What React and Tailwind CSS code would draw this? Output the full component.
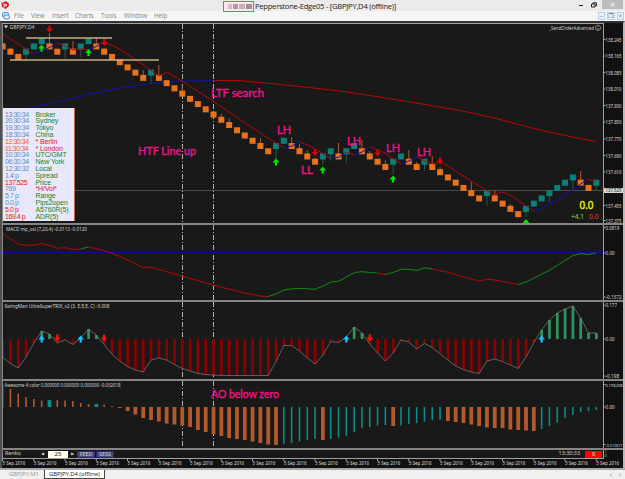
import React from "react";
import { ChevronLeft, ChevronRight } from "lucide-react";

const STEP = 7.812;
const barX = (i) => 2.6 + STEP * i;

// Renko brick rows, one per column (0 = highest price)
const LEVELS = [
  1, 2, 3, 2, 1, 0, 1, 2, 1, 2, 1, 0, 1, 2, 3, 4, 5, 6, 7, 6, 7, 8, 9, 10, 11, 12, 13, 14, 15, 16,
  17, 18, 19, 20, 21, 20, 19, 20, 21, 22, 23, 22, 21, 22, 21, 20, 21, 22, 23, 24, 23, 22, 23, 24,
  23, 24, 25, 26, 27, 28, 29, 30, 29, 30, 31, 32, 33, 32, 31, 30, 29, 28, 27, 26, 27, 28, 27,
];
const levelY = (l) => 41.2 + l * 5.24;

// column → wick end
const WICKS = {
  1: 48, 3: 61, 6: 33, 8: 59, 9: 41, 10: 57, 12: 38, 13: 48, 18: 70, 19: 84, 20: 65, 23: 85,
  28: 114, 29: 118, 33: 138, 35: 159, 37: 137, 38: 144, 39: 150, 40: 158, 41: 165, 42: 161,
  43: 143, 44: 163, 46: 140, 47: 151, 49: 160, 50: 174, 52: 150, 53: 162, 54: 171, 55: 156,
  56: 167, 60: 182, 62: 205, 63: 190, 65: 204, 67: 217, 70: 202, 73: 190, 74: 171, 76: 191,
};

const SWING_ZERO = 339;
const SWING = [
  357, 363.5, 368, 357, 343, 331, 334, 343, 340, 344.5, 338, 329, 335, 344.5, 354, 361, 366.5, 370,
  372, 360, 358, 360, 364.5, 368.5, 371, 373.5, 374.5, 375, 375.5, 375.5, 375.5, 375.5, 375.5,
  375.5, 375.5, 361.5, 345.5, 345.5, 351, 358, 364, 355, 341.5, 342.5, 337, 327, 333, 344, 353,
  361, 353, 340, 342, 349, 343.5, 347.5, 354, 360, 366, 369.5, 372, 373.5, 361, 359, 361.5, 365,
  368.5, 357, 342.5, 330, 320, 313, 309, 306, 318, 333, 333,
];

const AO_ZERO = 407;
const AO = [
  384, 389, 393.5, 397, 399, 400.5, 400, 400.1, 400.5, 401, 403, 404.1, 404, 404.5, 406, 408, 411,
  414.5, 418, 420, 421.5, 423.5, 424.5, 425.5, 427, 430, 432, 434, 436, 438, 439, 440, 441.5, 443,
  444.5, 445, 443.7, 443, 441.5, 440, 439, 440, 439, 437.5, 436, 432, 428, 427, 425.5, 425, 426,
  425.5, 424, 423, 421.5, 420, 419.9, 421, 422, 423, 424.5, 426, 427.5, 428, 428.1, 429.5, 430,
  430.5, 431, 429, 426, 422.5, 418, 415, 412, 411, 410,
];

const MACD = [
  ["#b40808", "3,234 10,238.5 18.5,244.2 26,245.3 34,245 41.5,243.7 49.5,245.3 57,248.3 65,247.7 73,249.7 80.5,249"],
  ["#108a10", "80.5,249 88.5,247"],
  ["#b40808", "88.5,247 96,248.5 105,251 120,256.5 143,267.5 151,267.3 182,276 213,285 245,293 260,296 268,296.5"],
  ["#108a10", "268,296.5 276,294 284,290 291,289 299,288.3 315,289.3 323,286 331,282 339,281 354.5,272.5 362,271.7 377,273"],
  ["#b40808", "377,273 385,274.5"],
  ["#108a10", "385,274.5 393,272.5 401,269.3 409,269.3 417,270.3 425,267.8 432,269"],
  ["#b40808", "432,269 449,272.5 464,277 479,281 487,279.3 495,280 518,284.5"],
  ["#108a10", "518,284.5 526,282 549,270.5 573,255.5 581,253.7 588,254.5 596,252.8"],
];

const FAST_MA = [
  ["#b40808", "3,34 33,54"],
  ["#1010c0", "33,54 45,50 57,43"],
  ["#b40808", "57,43 65,46 73,50 81,49 89,50"],
  ["#1010c0", "89,50 97,46 104,42"],
  ["#b40808", "104,42 120,49 136,60 159,76 167,72 182,81 213,101 245,123 268,138 284,148"],
  ["#1010c0", "284,148 292,146 299,142"],
  ["#b40808", "299,142 308,145 322,153 331,159"],
  ["#1010c0", "331,159 339,157 346,152"],
  ["#b40808", "346,152 354,155"],
  ["#1010c0", "354,155 362,152 370,147"],
  ["#b40808", "370,147 385,153 401,164"],
  ["#1010c0", "401,164 409,161 417,157"],
  ["#b40808", "417,157 425,161 433,164 440,162 448,166 471,181 494,195 502,192 510,195 534,211"],
  ["#1010c0", "534,211 542,208 557,200 572,190 588,179"],
  ["#b40808", "588,179 596,182"],
];

const PRICES = [
  ["138.245", 39.5], ["138.165", 56], ["138.085", 72.5], ["138.010", 89], ["137.930", 105.5],
  ["137.850", 122], ["137.770", 139], ["137.690", 155.5], ["137.610", 172], ["137.455", 205.5],
  ["137.375", 220.5],
];

const CLOCKS = [
  ["13:30:34", "Broker"],
  ["20:30:34", "Sydney"],
  ["19:30:34", "Tokyo"],
  ["18:30:34", "China"],
  ["12:30:34", "* Berlin", "text-[#f0592b]", "text-[#e0143c]"],
  ["11:30:34", "* London", "text-[#f0592b]", "text-[#e0143c]"],
  ["10:30:34", "UTC/GMT"],
  ["06:30:34", "New York"],
  ["12:30:32", "Local"],
  ["1.4 p", "Spread"],
  ["137.525", "Price", "text-[#f01020]"],
  ["769", "*H/Vol*", "text-[#5b8fc4]", "text-[#e0143c]"],
  ["5.7 p", "Range"],
  ["0.0 p", "Pips2open"],
  ["5.0 p", "A5760R(5)", "text-[#f01020]"],
  ["169.4 p", "ADR(5)", "text-[#f01020]"],
];

function Lines({ data }) {
  return data.map(([color, points], i) => (
    <polyline key={i} points={points} fill="none" stroke={color} strokeWidth="1" />
  ));
}

function Arrow({ x, y, color, down }) {
  return (
    <path
      d="M0 -3.5 L3.4 0.5 L1.1 0.5 L1.1 3.4 L-1.1 3.4 L-1.1 0.5 L-3.4 0.5 Z"
      fill={color}
      transform={`translate(${x} ${y}) ${down ? "rotate(180)" : ""}`}
    />
  );
}

function Label({ x, y, w, size = 6, color = "#d2d2d2", children, ...rest }) {
  return (
    <text x={x} y={y} fontSize={size} fill={color} textLength={w} lengthAdjust="spacingAndGlyphs" {...rest}>
      {children}
    </text>
  );
}

function Note({ x, y, w, size = 12, children }) {
  return (
    <Label x={x} y={y} w={w} size={size} color="#f0148c" stroke="#f0148c" strokeWidth="0.35" className="font-['Lato',sans-serif]">
      {children}
    </Label>
  );
}

/** Chart pane; the viewBox keeps every pane on the same coordinates */
function Pane({ top, height, axis, children }) {
  return (
    <svg className="block w-[621px] shrink-0 bg-[#191919]" width="621" height={height} viewBox={`2 ${top} 621 ${height}`}>
      <rect x="604" y={top} width="19" height={height} fill="#111" />
      {[182.5, 213.5].map((x) => (
        <line key={x} x1={x} x2={x} y1={top} y2={top + height} stroke="#b4b4a2" strokeDasharray="5 2 1 2" />
      ))}
      {children}
      <line x1="603.5" x2="603.5" y1={top} y2={top + height} stroke="#a0a0a0" />
      {axis.map(([text, y]) => (
        <g key={text}>
          <line x1="603" x2="605.5" y1={y} y2={y} stroke="#a0a0a0" />
          <Label x={605.5} y={y + 2} size={text.length > 7 ? 4.2 : 4.8} w={text.length > 7 ? 17 : text.length * 2.3} color="#dcdcdc">
            {text}
          </Label>
        </g>
      ))}
      <line x1="2.5" x2="2.5" y1={top} y2={top + height} stroke="#888" />
    </svg>
  );
}

const Divider = () => <div className="h-[2px] w-[621px] shrink-0 bg-[#858585]" />;

function PriceChart() {
  return (
    <Pane top={24} height={199} axis={PRICES}>
      <line x1="3" x2="603" y1="190.5" y2="190.5" stroke="#4a4a4a" />
      <polyline points="30,107.5 60,101.5 90,94 120,88 151,83.5 182,81 213,80.5" fill="none" stroke="#1010b4" />
      <polyline
        points="213,80.5 240,80.7 265,83 300,86.5 340,91 370,95.5 410,102 440,107 470,112.5 500,119.5 530,127.5 560,134.5 580,138.5 596,141.5"
        fill="none"
        stroke="#b40808"
      />
      {LEVELS.map((level, i) => {
        const up = i > 0 && level < LEVELS[i - 1];
        const y = levelY(level);
        return (
          <g key={i}>
            {WICKS[i] && <line x1={barX(i)} x2={barX(i)} y1={y} y2={WICKS[i]} stroke={up ? "#1f5c48" : "#a85a34"} />}
            <rect x={barX(i) - 3} y={y - 3} width="6" height="6" fill={up ? "#0b8078" : "#e8731f"} />
          </g>
        );
      })}
      <Lines data={FAST_MA} />
      <line x1="26" x2="112" y1="38" y2="38" stroke="#c8ac84" strokeWidth="1.5" />
      <line x1="10" x2="159" y1="60" y2="60" stroke="#c8ac84" strokeWidth="1.5" />

      {[[41.5, 48], [88.5, 52.5], [276, 162], [322.7, 170], [393, 179], [526, 222.5]].map(([x, y]) => (
        <Arrow key={x} x={x} y={y} color="#00e600" />
      ))}
      {[[49.5, 29], [104.3, 42.5], [315, 152.5], [377.5, 153], [440, 161]].map(([x, y]) => (
        <Arrow key={x} x={x} y={y} color="#e00000" down />
      ))}

      <path d="M4 25.5h4l-2 3z" fill="#ddd" />
      <Label x={9.5} y={29.3} w={25}>GBPJPY,D4</Label>
      <Label x={549} y={29.8} w={45}>_SendOrderAdvanced</Label>
      <circle cx="598" cy="27.8" r="2.6" fill="none" stroke="#b0b0b0" strokeWidth="0.7" />
      <path d="M596.8 28.7h2.4M597.1 27h.5M598.6 27h.5" stroke="#b0b0b0" strokeWidth="0.6" />

      <Note x={211} y={97} w={53}>LTF search</Note>
      <Note x={138} y={154.5} w={58}>HTF Line up</Note>
      <Note x={277} y={134} w={14}>LH</Note>
      <Note x={301} y={174} w={12}>LL</Note>
      <Note x={347} y={144.5} w={14}>LH</Note>
      <Note x={386} y={152} w={14}>LH</Note>
      <Note x={417} y={156} w={14}>LH</Note>

      <Label x={579.5} y={209} w={14} size={10.5} color="#f5f514" stroke="#f5f514" strokeWidth="0.3">0.0</Label>
      <Label x={571} y={219} w={13} size={7} color="#7be02a">+4.1</Label>
      <Label x={589} y={219} w={9.5} size={7} color="#e84a1c">0.0</Label>
      <rect x="604" y="188" width="19" height="5" fill="#d8d8d8" />
      <Label x={605.5} y={192.4} w={16} size={4.8} color="#111">137.525</Label>
    </Pane>
  );
}

function MacdChart() {
  return (
    <Pane top={225} height={75} axis={[["0.0819", 227.5], ["0.00", 253], ["-0.1372", 297]]}>
      <line x1="3" x2="603" y1="252.5" y2="252.5" stroke="#0b0b96" strokeWidth="1.2" />
      <Lines data={MACD} />
      <Label x={6} y={230.5} w={81}>MACD mp_osi (7,20,4) -0.0113 -0.0120</Label>
    </Pane>
  );
}

function SwingChart() {
  return (
    <Pane top={302} height={77} axis={[["0.177", 305.3], ["0.00", 339], ["-0.198", 376]]}>
      {SWING.map((y, i) => (
        <rect
          key={i}
          x={barX(i) - 1.3}
          width="2.7"
          y={Math.min(y, SWING_ZERO)}
          height={Math.abs(y - SWING_ZERO)}
          fill={y < SWING_ZERO ? "#2e9460" : "#8c0000"}
        />
      ))}
      <polyline points={SWING.map((y, i) => `${barX(i)},${y}`).join(" ")} fill="none" stroke="#808080" strokeWidth="0.7" />
      {[5, 10, 44, 69].map((i) => <Arrow key={i} x={barX(i)} y={339} color="#19bfff" />)}
      {[7, 13, 47].map((i) => <Arrow key={i} x={barX(i)} y={338} color="#ff1010" down />)}
      <Label x={4.5} y={308.3} w={105}>SwingMan UltraSuperTRIX_v2 (3, E,E,E, C) -0.008</Label>
    </Pane>
  );
}

function AwesomeChart() {
  return (
    <Pane top={381} height={67} axis={[["0.196208", 384.5], ["0.00", 407], ["-0.312617", 444.5]]}>
      {AO.map((y, i) => {
        const rising = i > 0 && y < AO[i - 1];
        const wide = rising === y < AO_ZERO;
        const w = wide ? 3.8 : 1.6;
        return (
          <rect
            key={i}
            x={barX(i) - w / 2}
            width={w}
            y={Math.min(y, AO_ZERO)}
            height={Math.abs(y - AO_ZERO)}
            fill={rising ? "#0d8a8a" : "#b25a2c"}
          />
        );
      })}
      <Label x={4.5} y={387} w={116}>Awesome 4 color 0.000000 0.000000 0.000000 -0.032018</Label>
      <Note x={211} y={398} w={68}>AO below zero</Note>
    </Pane>
  );
}

function SessionPanel() {
  return (
    <div className="absolute top-[84px] left-[1px] h-[113px] w-[72px] border-r border-[#c86450] bg-[#e8e8fa] pt-[3.5px] pl-[2px] text-[7px] leading-[6.82px]">
      {CLOCKS.map(([time, name, timeColor = "text-[#5b8fc4]", nameColor = "text-[#16851e]"]) => (
        <div key={name} className="flex whitespace-nowrap">
          <span className={`w-[30.5px] tracking-[-0.45px] ${timeColor}`}>{time}</span>
          <span className={`tracking-[-0.1px] ${nameColor}`}>{name}</span>
        </div>
      ))}
    </div>
  );
}

function RenkoBar() {
  return (
    <div className="flex h-[8px] w-[621px] shrink-0 items-center border-l border-[#888] bg-[#191919] text-[5.4px] leading-none text-[#d2d2d2]">
      <span className="w-[38px] pl-[2px]">Renko</span>
      <span className="w-[7px] text-[4px]">◀</span>
      <span className="h-[7px] w-[20px] bg-[#fffff0] text-center text-[6px] leading-[7px] text-[#222]">25</span>
      <span className="w-[9px] pl-[3px] text-[4px]">▶</span>
      <span className="mr-[1px] h-[7px] w-[18px] border border-[#28287a] bg-[#4a4a6c] text-center leading-[5px]">FEED</span>
      <span className="h-[7px] w-[18px] border border-[#28287a] bg-[#4a4a6c] text-center leading-[5px]">SESS</span>
      <span className="mr-[5px] ml-auto">13:30:33</span>
      <span className="h-[7px] w-[17px] bg-[#ff0000] text-center leading-[7px] text-white">X</span>
      <span className="ml-[1px] flex h-[8px] w-[20px] flex-col border-l border-[#a0a0a0] bg-[#111] pl-[1px] text-[3px] leading-[4px]">
        <span>1</span>
        <span>0</span>
      </span>
    </div>
  );
}

function DateAxis() {
  return (
    <svg className="block shrink-0 bg-[#111]" width="621" height="10" viewBox="2 458 621 10">
      <line x1="3" x2="604" y1="458.5" y2="458.5" stroke="#a0a0a0" />
      {Array.from({ length: 20 }, (_, i) => (
        <g key={i}>
          <line x1={2.5 + i * 31.25} x2={2.5 + i * 31.25} y1="458" y2="461" stroke="#a0a0a0" />
          <Label x={2.6 + i * 31.25} y={465.3} w={22.8} size={5.5} color="#dcdcdc">5 Sep 2016</Label>
        </g>
      ))}
    </svg>
  );
}

function TitleBar() {
  return (
    <div className="relative flex h-[11px] shrink-0 items-center justify-center bg-[#ebebeb]">
      <svg className="absolute top-[1px] left-[1px]" width="8" height="9" viewBox="0 0 8 9">
        <path d="M.5 2L5 .3 7.8 2v3.2L4.5 8 1 6z" fill="#d81e2c" />
        <path d="M2 3.3h3.5v1.5H3v2" fill="none" stroke="#fff" strokeWidth=".8" />
      </svg>
      <div className="absolute top-[1px] left-[223px] flex h-[11px] w-[31px] items-center gap-px border border-[#e05a50] bg-[#eee] pl-[4px]">
        <span className="h-[5px] w-[4px] bg-[#c4c4c4]" />
        <span className="h-[5px] w-[5px] bg-[#a2a2a2]" />
        <span className="h-[5px] w-[6px] bg-[#b8b8b8]" />
        <span className="h-[5px] w-[6px] bg-[#969696]" />
      </div>
      <span className="absolute top-[1px] left-[255px] text-[7.6px] leading-[10px] tracking-[-0.25px] whitespace-nowrap text-[#222] font-['Open_Sans',sans-serif]">
        Pepperstone-Edge05 - [GBPJPY,D4 (offline)]
      </span>
      <div className="absolute top-0 right-[2px] flex h-[9px] items-center">
        <span className="mt-[2px] mr-[8px] h-[1.5px] w-[4px] bg-[#222]" />
        <svg className="mr-[5px]" width="6" height="6" viewBox="0 0 6 6">
          <path d="M.5 2h3.5v3h-3.5zM2 2V.8h3.4v3H4" fill="none" stroke="#222" />
        </svg>
        <span className="h-[9px] w-[21px] bg-[#bcbcbc] text-center text-[8px] leading-[9px] text-white">×</span>
      </div>
    </div>
  );
}

function MenuBar() {
  return (
    <div className="flex h-[10px] shrink-0 items-center bg-[#f5f5f5] text-[6.2px] leading-[10px] text-[#858585] font-['Open_Sans',sans-serif]">
      <svg className="ml-[2px]" width="8" height="8" viewBox="0 0 8 8">
        <rect x=".5" y=".5" width="6" height="4.5" rx="1" fill="#c9e0f5" stroke="#4e8fd0" />
        <rect x="2" y="3" width="5.3" height="4" rx="1" fill="#e4f1fb" stroke="#4e8fd0" />
      </svg>
      <span className="ml-[4px] w-[17px]">File</span>
      <span className="w-[21px]">View</span>
      <span className="w-[23px]">Insert</span>
      <span className="w-[26px]">Charts</span>
      <span className="w-[23px]">Tools</span>
      <span className="w-[30px]">Window</span>
      <span>Help</span>
      <div className="mr-px ml-auto flex gap-[2px]">
        {["–", "❐", "×"].map((c) => (
          <span key={c} className="h-[8px] w-[7.5px] border border-[#b8d0e4] bg-[#e4eff8] text-center text-[6px] leading-[6px] text-[#52708c]">
            {c}
          </span>
        ))}
      </div>
    </div>
  );
}

export default function App() {
  return (
    <div className="flex h-[479px] w-[625px] flex-col overflow-hidden bg-[#f0f0f0] font-['Noto_Sans',sans-serif]">
      <TitleBar />
      <MenuBar />
      <div className="flex h-[447px] shrink-0 flex-col border-t-2 border-r-2 border-l-2 border-t-[#333] border-r-[#bbb] border-l-[#505050] bg-[#111]">
        <div className="h-px w-[602px] shrink-0 bg-[#a0a0a0]" />
        <div className="relative shrink-0">
          <PriceChart />
          <div className="font-['Liberation_Sans',sans-serif]">
            <SessionPanel />
          </div>
        </div>
        <Divider />
        <MacdChart />
        <Divider />
        <SwingChart />
        <Divider />
        <AwesomeChart />
        <Divider />
        <RenkoBar />
        <DateAxis />
      </div>
      <div className="h-[2px] shrink-0 bg-[#a8a8a8]" />
      <div className="flex h-[9px] shrink-0 items-center text-[6px] leading-[9px] tracking-[-0.1px] font-['Open_Sans',sans-serif]">
        <span className="w-[44px] pl-[9px] text-[#999]">GBPJPY,M1</span>
        <span className="h-[9px] w-[61px] border-x border-b border-[#444] bg-white pl-[4px] leading-[8px] whitespace-nowrap text-[#222]">
          GBPJPY,D4 (offline)
        </span>
        <ChevronLeft className="ml-auto" size={6} color="#777" />
        <ChevronRight className="mr-[2px] ml-[3px]" size={6} color="#777" />
      </div>
    </div>
  );
}
